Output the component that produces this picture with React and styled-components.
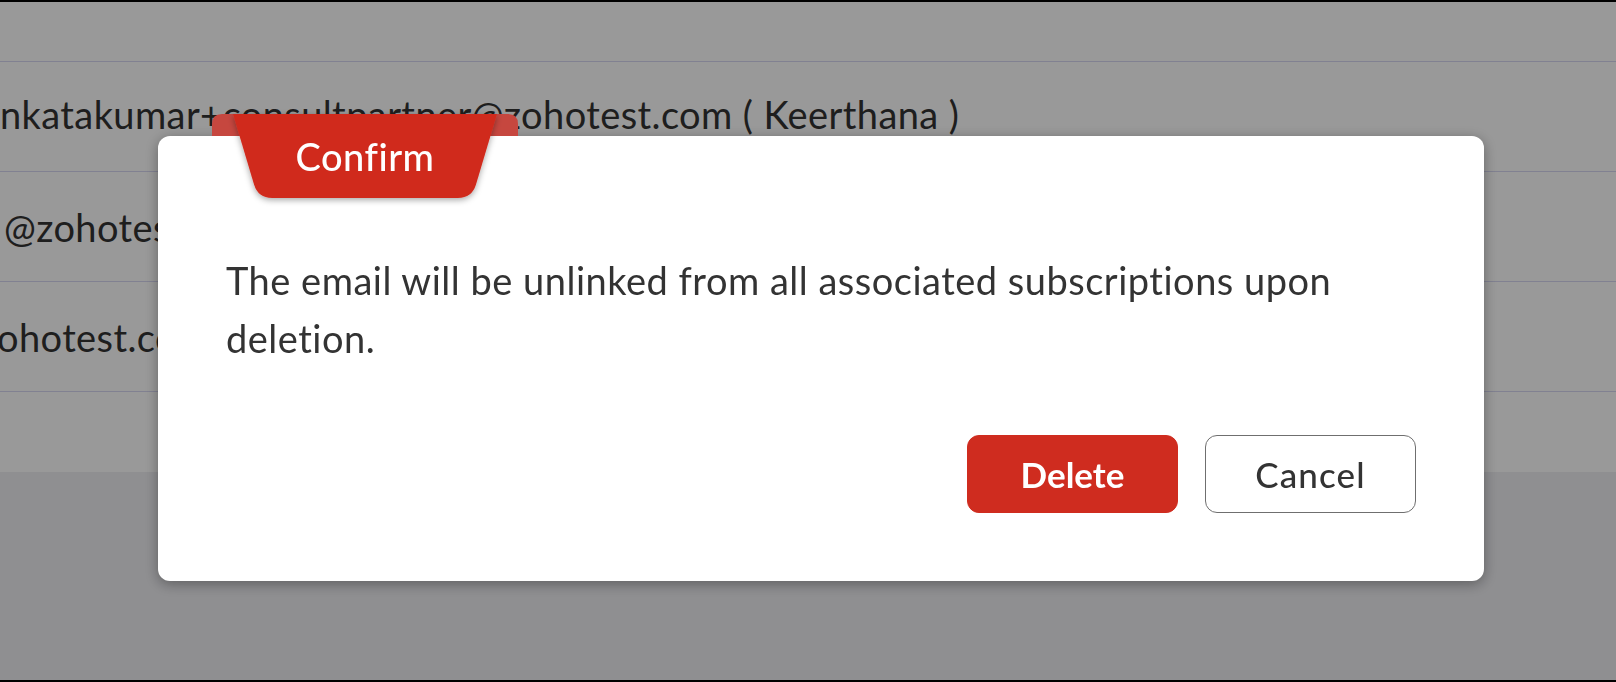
import React from "react";
import styled, { createGlobalStyle } from "styled-components";

const Global = createGlobalStyle`
  html, body { margin: 0; padding: 0; }
  body {
    width: 1616px;
    height: 682px;
    overflow: hidden;
    background: #eeeef2;
    font-family: Lato, "Open Sans", sans-serif;
  }
`;

const Page = styled.div`
  width: 1616px;
  height: 682px;
  box-sizing: border-box;
  border-top: 2px solid #000;
  border-bottom: 2px solid #000;
  display: flex;
  flex-direction: column;
  background: #eeeef2;
`;

const Table = styled.div`
  background: #fff;
  display: flex;
  flex-direction: column;
`;

const Row = styled.div`
  height: ${(p) => p.$h}px;
  box-sizing: border-box;
  padding-bottom: ${(p) => p.$lift || 0}px;
  border-bottom: ${(p) => (p.$last ? "none" : "1px solid #d8d8f2")};
  display: flex;
  align-items: center;
  overflow: hidden;
  white-space: nowrap;
`;

const Cell = styled.span`
  margin-left: ${(p) => p.$shift || 0}px;
  font-size: 38px;
  color: #333;
  letter-spacing: 0.4px;
`;

const Overlay = styled.div`
  position: fixed;
  inset: 0;
  background: rgba(0, 0, 0, 0.4);
  display: flex;
  align-items: flex-start;
  padding: 136px 0 0 158px;
`;

const Dialog = styled.div`
  position: relative;
  width: 1326px;
  height: 445px;
  box-sizing: border-box;
  background: #fff;
  border-radius: 12px;
  box-shadow: 0 3px 14px rgba(0, 0, 0, 0.35);
  padding: 115px 68px 68px 68px;
  display: flex;
  flex-direction: column;
`;

const Tab = styled.div`
  position: absolute;
  left: 54px;
  top: -22px;
  width: 306px;
  height: 84px;
  display: flex;
  align-items: center;
  justify-content: center;
`;

const TabShape = styled.svg`
  position: absolute;
  inset: 0;
  overflow: visible;
`;

const TabLabel = styled.span`
  position: relative;
  color: #fff;
  font-size: 38px;
  font-weight: 500;
  letter-spacing: 0.5px;
`;

const Message = styled.p`
  margin: 0;
  font-size: 38px;
  line-height: 58px;
  letter-spacing: 0.5px;
  color: #333;
`;

const Actions = styled.div`
  margin-top: auto;
  display: flex;
  justify-content: flex-end;
  gap: 27px;
`;

const Button = styled.button`
  width: 211px;
  height: 78px;
  box-sizing: border-box;
  border-radius: 12px;
  font-family: Lato, "Open Sans", sans-serif;
  font-size: 35px;
  cursor: pointer;
  border: 1px solid ${(p) => (p.$primary ? "#cf2c1f" : "#6f6f6f")};
  background: ${(p) => (p.$primary ? "#cf2c1f" : "#fff")};
  color: ${(p) => (p.$primary ? "#fff" : "#333")};
  font-weight: ${(p) => (p.$primary ? 700 : 500)};
  letter-spacing: ${(p) => (p.$primary ? 0 : 1.1)}px;
`;

const rows = [
  { h: 60, text: "" },
  { h: 110, text: "nkatakumar+consultpartner@zohotest.com ( Keerthana )", shift: 0, lift: 6 },
  { h: 110, text: "@zohotest.com", shift: 4 },
  { h: 110, text: "ohotest.com", shift: -3 },
  { h: 80, text: "", last: true },
];

export default function App() {
  return (
    <>
      <Global />
      <Page>
        <Table>
          {rows.map((r, i) => (
            <Row key={i} $h={r.h} $last={r.last} $lift={r.lift}>
              {r.text && <Cell $shift={r.shift}>{r.text}</Cell>}
            </Row>
          ))}
        </Table>
      </Page>
      <Overlay>
        <Dialog role="dialog">
          <Tab>
            <TabShape width="306" height="84" viewBox="0 0 306 84">
              <defs>
                <filter id="tabShadow" x="-20%" y="-20%" width="140%" height="160%">
                  <feDropShadow dx="0" dy="2" stdDeviation="3" floodColor="#000" floodOpacity="0.35" />
                </filter>
              </defs>
              <path d="M0 22 V10 Q0 0 10 0 H296 Q306 0 306 10 V22 Z" fill="#c6473f" />
              <path
                d="M21 0 H285 L264 70.6 Q260 84 246 84 H60 Q46 84 42 70.6 Z"
                fill="#d02c1f"
                filter="url(#tabShadow)"
              />
            </TabShape>
            <TabLabel>Confirm</TabLabel>
          </Tab>
          <Message>
            The email will be unlinked from all associated subscriptions upon deletion.
          </Message>
          <Actions>
            <Button $primary>Delete</Button>
            <Button>Cancel</Button>
          </Actions>
        </Dialog>
      </Overlay>
    </>
  );
}
